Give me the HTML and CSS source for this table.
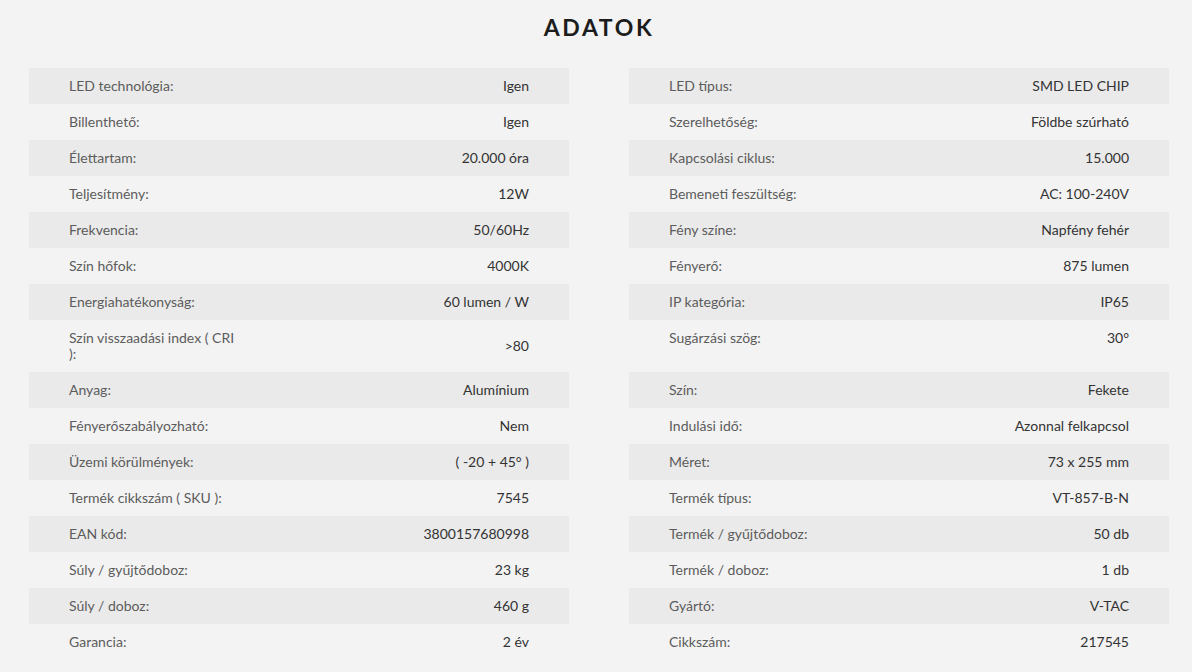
FILE: index.html
```html
<!DOCTYPE html>
<html lang="hu">
<head>
<meta charset="utf-8">
<title>Adatok</title>
<link rel="stylesheet" href="styles.css">
</head>
<body>
<section class="specs-section">
  <h2 class="specs-title">ADATOK</h2>
  <div class="specs">
    <div class="row l"><span class="label">LED technológia:</span><span class="value">Igen</span></div>
    <div class="row r"><span class="label">LED típus:</span><span class="value">SMD LED CHIP</span></div>
    <div class="row l"><span class="label">Billenthető:</span><span class="value">Igen</span></div>
    <div class="row r"><span class="label">Szerelhetőség:</span><span class="value">Földbe szúrható</span></div>
    <div class="row l"><span class="label">Élettartam:</span><span class="value">20.000 óra</span></div>
    <div class="row r"><span class="label">Kapcsolási ciklus:</span><span class="value">15.000</span></div>
    <div class="row l"><span class="label">Teljesítmény:</span><span class="value">12W</span></div>
    <div class="row r"><span class="label">Bemeneti feszültség:</span><span class="value">AC: 100-240V</span></div>
    <div class="row l"><span class="label">Frekvencia:</span><span class="value">50/60Hz</span></div>
    <div class="row r"><span class="label">Fény színe:</span><span class="value">Napfény fehér</span></div>
    <div class="row l"><span class="label">Szín hőfok:</span><span class="value">4000K</span></div>
    <div class="row r"><span class="label">Fényerő:</span><span class="value">875 lumen</span></div>
    <div class="row l"><span class="label">Energiahatékonyság:</span><span class="value">60 lumen / W</span></div>
    <div class="row r"><span class="label">IP kategória:</span><span class="value">IP65</span></div>
    <div class="row l"><span class="label">Szín visszaadási index ( CRI ):</span><span class="value">&gt;80</span></div>
    <div class="row r"><span class="label">Sugárzási szög:</span><span class="value">30°</span></div>
    <div class="row l"><span class="label">Anyag:</span><span class="value">Alumínium</span></div>
    <div class="row r"><span class="label">Szín:</span><span class="value">Fekete</span></div>
    <div class="row l"><span class="label">Fényerőszabályozható:</span><span class="value">Nem</span></div>
    <div class="row r"><span class="label">Indulási idő:</span><span class="value">Azonnal felkapcsol</span></div>
    <div class="row l"><span class="label">Üzemi körülmények:</span><span class="value">( -20 + 45° )</span></div>
    <div class="row r"><span class="label">Méret:</span><span class="value">73 x 255 mm</span></div>
    <div class="row l"><span class="label">Termék cikkszám ( SKU ):</span><span class="value">7545</span></div>
    <div class="row r"><span class="label">Termék típus:</span><span class="value">VT-857-B-N</span></div>
    <div class="row l"><span class="label">EAN kód:</span><span class="value">3800157680998</span></div>
    <div class="row r"><span class="label">Termék / gyűjtődoboz:</span><span class="value">50 db</span></div>
    <div class="row l"><span class="label">Súly / gyűjtődoboz:</span><span class="value">23 kg</span></div>
    <div class="row r"><span class="label">Termék / doboz:</span><span class="value">1 db</span></div>
    <div class="row l"><span class="label">Súly / doboz:</span><span class="value">460 g</span></div>
    <div class="row r"><span class="label">Gyártó:</span><span class="value">V-TAC</span></div>
    <div class="row l"><span class="label">Garancia:</span><span class="value">2 év</span></div>
    <div class="row r"><span class="label">Cikkszám:</span><span class="value">217545</span></div>
  </div>
</section>
</body>
</html>
```
FILE: styles.css
```css
html, body {
  margin: 0;
  padding: 0;
  background: #f3f3f3;
}
body {
  font-family: "Lato", "Noto Sans", sans-serif;
  color: #222;
}
.specs-section {
  width: 1140px;
  margin-left: 29px;
  padding-top: 13px;
}
.specs-title {
  margin: 0 0 27px;
  text-align: center;
  font-size: 23px;
  line-height: 28px;
  font-weight: 700;
  letter-spacing: 2.6px;
  color: #1c1c1c;
}
.specs {
  display: grid;
  grid-template-columns: 540px 540px;
  column-gap: 60px;
}
.row {
  display: flex;
  justify-content: space-between;
  padding: 10px 40px;
  font-size: 14px;
  line-height: 16px;
}
.row.l { align-items: center; }
.row.r { align-items: flex-start; }
.specs .row:nth-child(4n+1),
.specs .row:nth-child(4n+2) {
  background: #eaeaea;
}
.label {
  color: #5c5c5c;
  max-width: 170px;
}
.value {
  color: #333;
  text-align: right;
}
```
